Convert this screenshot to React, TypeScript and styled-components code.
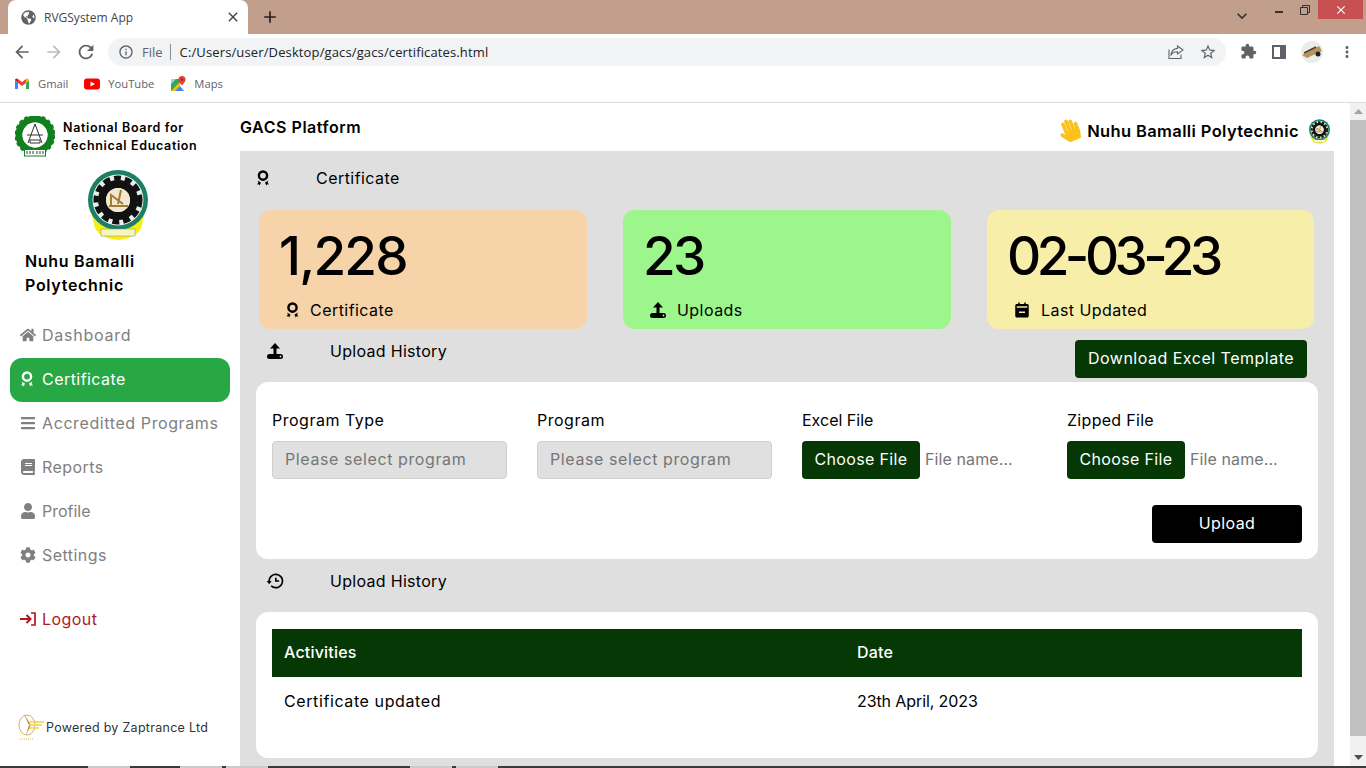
import React from "react";
import styled, { createGlobalStyle } from "styled-components";
import { BiHistory, BiSolidCalendarMinus } from "react-icons/bi";
import { FaBars, FaBook, FaCog, FaGlobeAmericas, FaHandPaper, FaHome, FaUser } from "react-icons/fa";
import { MdArrowBack, MdArrowForward, MdClose, MdExtension, MdInfoOutline, MdKeyboardArrowDown, MdMoreVert, MdRefresh, MdStarBorder, MdAdd } from "react-icons/md";

const Global = createGlobalStyle`
  html, body { margin: 0; padding: 0; overflow: hidden; background: #fff; }
  * { box-sizing: border-box; }
  body { font-family: "Inter", "Liberation Sans", sans-serif; }
`;
const Screen = styled.div`width: 1366px; height: 768px; display: flex; flex-direction: column; overflow: hidden;`;
const TabStrip = styled.div`height: 34px; background: #c19f8c; display: flex; align-items: flex-end; padding-left: 8px;`;
const Tab = styled.div`width: 240px; height: 34px; background: #fff; border-radius: 8px 8px 0 0; display: flex; align-items: center; padding: 0 7px 0 13px; gap: 8px; color: #5f6368; font: 12px "Open Sans", sans-serif;`;
const TabTitle = styled.span`flex: 1; color: #45474a;`;
const NewTab = styled.div`width: 36px; height: 34px; margin-left: 4px; display: flex; align-items: center; justify-content: center; color: #222;`;
const StripSpacer = styled.div`flex: 1;`;
const WindowControls = styled.div`display: flex; align-self: flex-start; align-items: flex-start; color: #333; margin-right: 3px;`;
const TabMenu = styled.div`width: 30px; height: 34px; margin-right: 9px; display: flex; align-items: flex-end; justify-content: center; padding-bottom: 8px;`;
const WinBtn = styled.div`width: 26px; height: 19px; color: #333; display: flex; align-items: center; justify-content: center;`;
const CloseBtn = styled(WinBtn)`width: 45px; background: #c75050; color: #fff;`;
const Toolbar = styled.div`height: 35px; background: #fff; display: flex; align-items: center; padding: 0 0 0 6px; color: #5f6368;`;
const NavIcon = styled.div<{ $dim?: boolean }>`width: 32px; height: 28px; display: flex; align-items: center; justify-content: center; color: ${p => p.$dim ? "#bcbcbc" : "#5f6368"};`;
const Omnibox = styled.div`width: 1118px; height: 28px; margin-left: 6px; border-radius: 14px; background: #f1f3f4; display: flex; align-items: center; padding: 0 9px 0 10px; font: 13px "Open Sans", sans-serif;`;
const OmniFile = styled.span`margin-left: 8px; color: #5f6368; padding-right: 7px; border-right: 1px solid #8a8d90; line-height: 16px;`;
const OmniUrl = styled.span`margin-left: 9px; flex: 1; color: #202124; letter-spacing: 0.13px;`;
const OmniActions = styled.div`display: flex; gap: 15px; align-items: center;`;
const ToolIcons = styled.div`display: flex; align-items: center; margin-left: 14px; gap: 15px;`;
const Bookmarks = styled.div`height: 34px; background: #fff; border-bottom: 1px solid #dadce0; display: flex; align-items: center; padding: 0 0 4px 14px; gap: 16px;`;
const Bookmark = styled.div`display: flex; align-items: center; gap: 8px; font: 11.2px "Open Sans", sans-serif; color: #5f6368;`;
const Page = styled.div`flex: 1; display: flex; min-height: 0; background: #fff;`;
const Sidebar = styled.aside`width: 240px; flex: none; display: flex; flex-direction: column; padding: 13px 10px 0; background: #fff;`;
const Brand = styled.div`display: flex; align-items: center; gap: 8px; padding-left: 5px;`;
const BrandName = styled.div`font-size: 12.5px; font-weight: 600; line-height: 18px; color: #000; letter-spacing: 0.65px;`;
const SchoolLogo = styled.div`display: flex; justify-content: center; margin: 13px 4px 9px 0;`;
const SchoolName = styled.div`font-size: 16px; font-weight: 600; line-height: 24px; padding-left: 15px; color: #000; margin-bottom: 17px; letter-spacing: 0.7px;`;
const NavList = styled.nav`display: flex; flex-direction: column;`;
const NavItem = styled.div<{ $active?: boolean; $logout?: boolean; $ls?: number }>`height: 44px; display: flex; align-items: center; gap: 6px; padding: 0 0 2px 10px; border-radius: 12px; font-size: 16px; letter-spacing: ${p => p.$ls ?? 0.45}px; background: ${p => p.$active ? "#28a745" : "transparent"}; color: ${p => p.$active ? "#fff" : p.$logout ? "#b0181e" : "#808080"}; margin-top: ${p => p.$logout ? "20px" : "0"};`;
const NavSlot = styled.span`width: 16px; flex: none; display: flex; align-items: center;`;
const Powered = styled.div`margin-top: auto; margin-bottom: 25px; display: flex; align-items: center; padding-left: 7px; gap: 2px; font-size: 12.5px; color: #333; letter-spacing: 0.28px;`;
const Main = styled.main`width: 1094px; flex: none; display: flex; flex-direction: column;`;
const TopBar = styled.header`height: 48px; display: flex; justify-content: space-between; align-items: flex-start;`;
const PlatformName = styled.div`font-size: 16px; font-weight: 600; margin-top: 14px; color: #000; line-height: 20px; letter-spacing: 0.55px;`;
const Greeting = styled.div`display: flex; align-items: center; margin: 15px 4px 0 0; gap: 5px; font-size: 16.5px; font-weight: 600; color: #000; letter-spacing: 0.37px;`;
const GreetingGap = styled.span`width: 0;`;
const Panel = styled.div`flex: 1; background: #dfdfdf; display: flex; flex-direction: column; padding: 0 16px; color: #000;`;
const SectionHeading = styled.div<{ $indent: number; $ls?: number }>`height: 28px; display: flex; align-items: center; font-size: 16px; letter-spacing: ${p => p.$ls ?? 0.45}px; padding-left: ${p => p.$indent}px;`;
const HeadingIcon = styled.span<{ $w: number }>`width: ${p => p.$w}px; display: flex;`;
const FirstHeading = styled(SectionHeading)`height: 26px; margin-top: 14px;`;
const Cards = styled.div`display: grid; grid-template-columns: 328px 328px 327px; gap: 36px; margin: 19px 0 0 3px;`;
const StatCard = styled.div<{ $bg: string }>`height: 119px; border-radius: 12px; background: ${p => p.$bg}; display: flex; flex-direction: column; padding: 13px 20px 0;`;
const StatValue = styled.div<{ $ls: number }>`font-size: 53px; line-height: 66px; font-weight: 500; letter-spacing: ${p => p.$ls}px; height: 68px;`;
const StatLabel = styled.div`display: flex; align-items: center; margin-top: 9px; padding-left: 6px; gap: 10px; font-size: 16px; letter-spacing: 0.45px;`;
const UploadRow = styled.div`display: flex; justify-content: space-between; align-items: flex-start; height: 53px; padding: 8px 11px 0 10px;`;
const DarkButton = styled.div`background: #063806; color: #fff; height: 38px; border-radius: 4px; display: flex; align-items: center; justify-content: center; padding-bottom: 2px; font-size: 16px; letter-spacing: 0.35px;`;
const TemplateButton = styled(DarkButton)`width: 232px; margin-top: 3px; letter-spacing: 0.5px;`;
const ChooseButton = styled(DarkButton)`width: 118px; flex: none;`;
const WhiteCard = styled.section`background: #fff; border-radius: 12px; padding: 0 16px;`;
const FormCard = styled(WhiteCard)`height: 177px; padding-top: 28px;`;
const FormGrid = styled.div`display: grid; grid-template-columns: repeat(4, 235px); column-gap: 30px;`;
const Field = styled.div`display: flex; flex-direction: column; gap: 10px;`;
const FieldLabel = styled.label<{ $ls?: number }>`font-size: 16px; line-height: 21px; letter-spacing: ${p => p.$ls ?? 0.5}px;`;
const FakeSelect = styled.div`height: 38px; background: #e0e0e0; border: 1px solid #cfcfcf; border-radius: 4px; display: flex; align-items: center; padding: 0 0 2px 12px; color: #767676; font-size: 16px; letter-spacing: 0.6px;`;
const FileRow = styled.div`display: flex; align-items: center; gap: 5px;`;
const FileName = styled.span`color: #767676; font-size: 16px; letter-spacing: 0.1px; margin-bottom: 2px;`;
const UploadWrap = styled.div`display: flex; justify-content: flex-end; margin-top: 26px;`;
const UploadButton = styled.div`width: 150px; height: 38px; background: #000; color: #fff; border-radius: 4px; display: flex; align-items: center; justify-content: center; padding-bottom: 2px; font-size: 16px; letter-spacing: 0.4px;`;
const HistoryHeading = styled(SectionHeading)`height: 44px; margin-bottom: 9px;`;
const TableCard = styled(WhiteCard)`height: 146px; padding-top: 17px;`;
const Table = styled.table`width: 100%; border-collapse: collapse; font-size: 16px;`;
const Th = styled.th<{ $w?: number }>`background: #063806; color: #fff; font-weight: 500; text-align: left; height: 48px; padding: 0 12px 2px; letter-spacing: 0.2px; width: ${p => p.$w ? p.$w + "px" : "auto"};`;
const Td = styled.td<{ $ls: number }>`height: 48px; padding: 0 12px; letter-spacing: ${p => p.$ls}px;`;
const Scrollbar = styled.div`width: 16px; flex: none; margin-left: 16px; background: #f1f1f1; display: flex; flex-direction: column; align-items: center;`;
const ScrollUp = styled.div`height: 17px; display: flex; align-items: center; justify-content: center;`;
const ScrollThumb = styled.div`width: 16px; height: 616px; background: #c1c1c1;`;
const ScrollDown = styled.div`margin-top: auto; height: 17px; display: flex; align-items: center;`;
const Taskbar = styled.div`height: 2px; background: #3e3a36; display: flex;`;
const TaskItem = styled.div<{ $w: number; $gap: number }>`width: ${p => p.$w}px; margin-left: ${p => p.$gap}px; background: #cfcac6;`;

const PolyLogo = ({ w, h }: { w: number; h: number }) => (
  <svg width={w} height={h} viewBox="0 0 60 70">
    <path d="M3 42 Q8 57 30 60 Q52 57 57 42 L53 58 Q48 68 30 70 Q12 68 7 58 Z" fill="#f4ef10" />
    <circle cx="30" cy="30" r="30" fill="#1b7f66" />
    <circle cx="30" cy="30" r="25.5" fill="#e8efe9" />
    <circle cx="30" cy="30" r="22" fill="none" stroke="#111" strokeWidth="5" strokeDasharray="7 4" />
    <circle cx="30" cy="30" r="16" fill="none" stroke="#111" strokeWidth="8" />
    <circle cx="30" cy="30" r="12" fill="#f2e8cf" />
    <path d="M21 36h19M23 36V25l12 9M33 20l-3 14" stroke="#a07c35" strokeWidth="2" fill="none" />
    <rect x="13" y="59" width="34" height="7" fill="#f8f6c0" stroke="#888" strokeWidth=".5" />
  </svg>
);
const NbteLogo = () => (
  <svg width="40" height="41" viewBox="0 0 40 41">
    <circle cx="20" cy="19" r="16" fill="none" stroke="#12801f" strokeWidth="7" />
    <circle cx="20" cy="19" r="19" fill="none" stroke="#12801f" strokeWidth="3" strokeDasharray="3.5 2.5" />
    <circle cx="20" cy="19" r="12.5" fill="#fff" />
    <path d="M20 8 13 27M20 8l7 19M12 19h16M15 24h10v3H15z" stroke="#333" strokeWidth="1" fill="none" />
    <rect x="9" y="33" width="22" height="7.5" fill="#12801f" />
    <rect x="10" y="34" width="20" height="5.5" fill="#fff" />
    <path d="M12 35v3M15 35v3M18 35v3M22 35v3M25 35v3M28 35v3" stroke="#333" strokeWidth="1" />
  </svg>
);
const ZapLogo = () => (
  <svg width="27" height="28" viewBox="0 0 27 28">
    <ellipse cx="10" cy="12" rx="8" ry="10" fill="none" stroke="#d8a878" strokeWidth="1" />
    <path d="M7 1l5 11-3 10 5-10z" fill="#b8821c" />
    <path d="M12 9h15M12 12h13M12 15h10" stroke="#ecd34c" strokeWidth="1.4" />
    <path d="M3 26h13" stroke="#e8cf8c" strokeWidth="1.4" strokeDasharray="1 1" />
  </svg>
);
const Waving = () => (
  <svg width="26" height="26" viewBox="0 0 26 26">
    <g transform="rotate(-22 13 13) translate(2 1)"><FaHandPaper size={23} color="#fcc21b" /></g>
  </svg>
);
const AwardIcon = ({ w = 14, h = 16 }: { w?: number; h?: number }) => (
  <svg width={w} height={h} viewBox="0 0 14 16" fill="currentColor">
    <circle cx="7" cy="5.6" r="4.1" fill="none" stroke="currentColor" strokeWidth="2.4" />
    <path d="M1.6 10.5 3.6 11.8 5 12.4 3.7 15.6 2.9 14.2 1 14.6 2.4 12.4zM12.4 10.5 10.4 11.8 9 12.4 10.3 15.6 11.1 14.2 13 14.6 11.6 12.4z" />
  </svg>
);
const LogoutIcon = () => (
  <svg width="16" height="16" viewBox="0 0 16 16" fill="none" stroke="#b0181e">
    <path d="M0 8h10M6.5 4l4 4-4 4" strokeWidth="2" />
    <path d="M11 2h4v12h-4" strokeWidth="1.7" />
  </svg>
);
const UploadIcon = ({ size = 18 }: { size?: number }) => (
  <svg width={size} height={size} viewBox="0 0 18 18" fill="currentColor">
    <path d="M9 1 14 6.5H10.5V12h-3V6.5H4z" />
    <rect x="1" y="12" width="16" height="5" rx="2.5" />
    <circle cx="14.5" cy="14.5" r=".9" fill="#dfdfdf" />
  </svg>
);
const GmailIcon = () => (
  <svg width="16" height="16" viewBox="0 0 16 16">
    <path d="M1 4v9h3V7z" fill="#4285f4" /><path d="M15 4v9h-3V7z" fill="#34a853" />
    <path d="M4 7V3l4 3 4-3v4L8 10z" fill="#ea4335" /><path d="M1 4c0-1.5 2-2 3-1v4z" fill="#c5221f" /><path d="M15 4c0-1.5-2-2-3-1v4z" fill="#fbbc04" />
  </svg>
);
const YoutubeIcon = () => (
  <svg width="16" height="16" viewBox="0 0 16 16">
    <rect y="2.5" width="16" height="11" rx="3" fill="#f00" /><path d="M6.5 5.5v5L11 8z" fill="#fff" />
  </svg>
);
const MapsIcon = () => (
  <svg width="16" height="16" viewBox="0 0 16 16">
    <path d="M1 3h9v12H1z" fill="#34a853" /><path d="M1 15 10 6v9z" fill="#fbbc04" /><path d="M5 15l5-5 4 5z" fill="#4285f4" />
    <path d="M1 3h5L1 8z" fill="#a7d0f0" />
    <path d="M12 0a3.6 3.6 0 0 0-3.6 3.6C8.4 6 12 9.5 12 9.5s3.6-3.5 3.6-5.9A3.6 3.6 0 0 0 12 0z" fill="#ea4335" /><circle cx="12" cy="3.6" r="1.3" fill="#a3261c" />
  </svg>
);
const ShareIcon = () => (
  <svg width="16" height="16" viewBox="0 0 16 16" fill="none" stroke="#5f6368" strokeWidth="1.1">
    <path d="M1 5.5V14.5h12V10.5M9.5 2 15 6l-5.5 4V7.7C6 7.7 4 9 2.8 11.5 3.2 7.5 5.5 4.8 9.5 4.4z" />
  </svg>
);
const PanelIcon = () => (
  <svg width="14" height="14" viewBox="0 0 14 14"><path d="M0 0h14v14H0z" fill="#5f6368" /><path d="M2 2h6v10H2z" fill="#fff" /></svg>
);
const Avatar = () => (
  <svg width="22" height="22" viewBox="0 0 22 22">
    <circle cx="11" cy="11" r="11" fill="#e9ece8" />
    <path d="M1 14 18 5l3 5L6 17z" fill="#b8935a" /><path d="M3 12l12-6" stroke="#4c3a22" strokeWidth="1.4" />
    <circle cx="17" cy="13" r="2.5" fill="#222" />
  </svg>
);
const Restore = () => (
  <svg width="10" height="10" viewBox="0 0 10 10" fill="none" stroke="#333"><path d="M.5 2.5h7v7h-7zM2.5 2.5v-2h7v7h-2" /></svg>
);
const Minimize = () => (
  <svg width="8" height="6" viewBox="0 0 8 6"><path d="M0 4h8v2H0z" fill="#333" /></svg>
);

const navItems = [
  { label: "Dashboard", icon: <FaHome size={18} />, ls: 0.75 },
  { label: "Certificate", icon: <AwardIcon />, active: true },
  { label: "Accreditted Programs", icon: <FaBars size={16} />, ls: 0.6 },
  { label: "Reports", icon: <FaBook size={16} /> },
  { label: "Profile", icon: <FaUser size={16} />, ls: 0 },
  { label: "Settings", icon: <FaCog size={16} /> },
];

export default function App() {
  return (
    <Screen>
      <Global />
      <TabStrip>
        <Tab>
          <FaGlobeAmericas size={15} />
          <TabTitle>RVGSystem App</TabTitle>
          <MdClose size={16} color="#3c4043" />
        </Tab>
        <NewTab><MdAdd size={20} /></NewTab>
        <StripSpacer />
        <WindowControls>
          <TabMenu><MdKeyboardArrowDown size={20} /></TabMenu>
          <WinBtn><Minimize /></WinBtn>
          <WinBtn><Restore /></WinBtn>
          <CloseBtn><MdClose size={14} /></CloseBtn>
        </WindowControls>
      </TabStrip>
      <Toolbar>
        <NavIcon><MdArrowBack size={20} /></NavIcon>
        <NavIcon $dim><MdArrowForward size={20} /></NavIcon>
        <NavIcon><MdRefresh size={22} /></NavIcon>
        <Omnibox>
          <MdInfoOutline size={16} color="#5f6368" />
          <OmniFile>File</OmniFile>
          <OmniUrl>C:/Users/user/Desktop/gacs/gacs/certificates.html</OmniUrl>
          <OmniActions><ShareIcon /><MdStarBorder size={18} color="#5f6368" /></OmniActions>
        </Omnibox>
        <ToolIcons>
          <MdExtension size={17} />
          <PanelIcon />
          <Avatar />
          <MdMoreVert size={18} />
        </ToolIcons>
      </Toolbar>
      <Bookmarks>
        <Bookmark><GmailIcon />Gmail</Bookmark>
        <Bookmark><YoutubeIcon />YouTube</Bookmark>
        <Bookmark><MapsIcon />Maps</Bookmark>
      </Bookmarks>
      <Page>
        <Sidebar>
          <Brand>
            <NbteLogo />
            <BrandName>National Board for<br />Technical Education</BrandName>
          </Brand>
          <SchoolLogo><PolyLogo w={60} h={70} /></SchoolLogo>
          <SchoolName>Nuhu Bamalli<br />Polytechnic</SchoolName>
          <NavList>
            {navItems.map(n => (
              <NavItem key={n.label} $active={n.active} $ls={n.ls}><NavSlot>{n.icon}</NavSlot>{n.label}</NavItem>
            ))}
            <NavItem $logout><NavSlot><LogoutIcon /></NavSlot>Logout</NavItem>
          </NavList>
          <Powered><ZapLogo />Powered by Zaptrance Ltd</Powered>
        </Sidebar>
        <Main>
          <TopBar>
            <PlatformName>GACS Platform</PlatformName>
            <Greeting><Waving />Nuhu Bamalli Polytechnic<GreetingGap /><PolyLogo w={21} h={25} /></Greeting>
          </TopBar>
          <Panel>
            <FirstHeading $indent={0}>
              <HeadingIcon $w={60}><AwardIcon /></HeadingIcon>Certificate
            </FirstHeading>
            <Cards>
              <StatCard $bg="#f7d3a9">
                <StatValue $ls={-1.8}>1,228</StatValue>
                <StatLabel><AwardIcon w={15} />Certificate</StatLabel>
              </StatCard>
              <StatCard $bg="#9cf68c">
                <StatValue $ls={-2.6}>23</StatValue>
                <StatLabel><UploadIcon />Uploads</StatLabel>
              </StatCard>
              <StatCard $bg="#f7eeaa">
                <StatValue $ls={-4.5}>02-03-23</StatValue>
                <StatLabel><BiSolidCalendarMinus size={18} />Last Updated</StatLabel>
              </StatCard>
            </Cards>
            <UploadRow>
              <SectionHeading $indent={0} $ls={0.3}><HeadingIcon $w={64}><UploadIcon /></HeadingIcon>Upload History</SectionHeading>
              <TemplateButton>Download Excel Template</TemplateButton>
            </UploadRow>
            <FormCard>
              <FormGrid>
                <Field><FieldLabel>Program Type</FieldLabel><FakeSelect>Please select program</FakeSelect></Field>
                <Field><FieldLabel>Program</FieldLabel><FakeSelect>Please select program</FakeSelect></Field>
                <Field><FieldLabel $ls={0}>Excel File</FieldLabel><FileRow><ChooseButton>Choose File</ChooseButton><FileName>File name...</FileName></FileRow></Field>
                <Field><FieldLabel $ls={0.3}>Zipped File</FieldLabel><FileRow><ChooseButton>Choose File</ChooseButton><FileName>File name...</FileName></FileRow></Field>
              </FormGrid>
              <UploadWrap><UploadButton>Upload</UploadButton></UploadWrap>
            </FormCard>
            <HistoryHeading $indent={9} $ls={0.3}><HeadingIcon $w={65}><BiHistory size={20} /></HeadingIcon>Upload History</HistoryHeading>
            <TableCard>
              <Table>
                <thead><tr><Th $w={573}>Activities</Th><Th>Date</Th></tr></thead>
                <tbody><tr><Td $ls={0.6}>Certificate updated</Td><Td $ls={-0.1}>23th April, 2023</Td></tr></tbody>
              </Table>
            </TableCard>
          </Panel>
        </Main>
        <Scrollbar>
          <ScrollUp><svg width="9" height="5" viewBox="0 0 9 5"><path d="M4.5 0 9 5H0z" fill="#a3a3a3" /></svg></ScrollUp>
          <ScrollThumb />
          <ScrollDown><svg width="9" height="5" viewBox="0 0 9 5"><path d="M4.5 5 9 0H0z" fill="#505050" /></svg></ScrollDown>
        </Scrollbar>
      </Page>
      <Taskbar>
        <TaskItem $w={42} $gap={88} /><TaskItem $w={42} $gap={50} /><TaskItem $w={42} $gap={4} /><TaskItem $w={42} $gap={142} /><TaskItem $w={42} $gap={4} />
      </Taskbar>
    </Screen>
  );
}
